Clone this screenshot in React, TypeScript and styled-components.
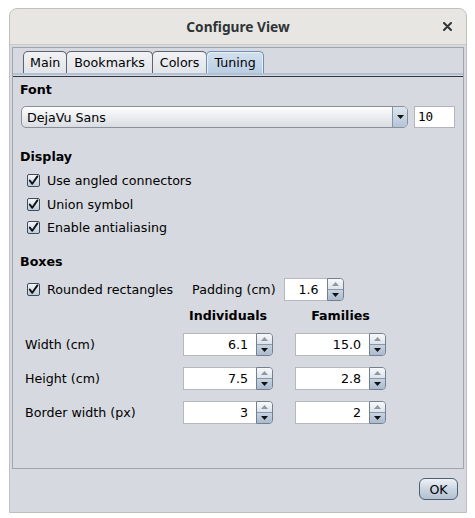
import React from 'react';
import styled, { createGlobalStyle } from 'styled-components';

const GlobalStyle = createGlobalStyle`
  html, body {
    margin: 0;
    padding: 0;
    background: #ffffff;
  }

  body {
    font-family: 'DejaVu Sans', 'Liberation Sans', sans-serif;
    font-size: 12.65px;
    color: #000000;
  }

  * {
    box-sizing: border-box;
  }
`;

const Window = styled.div`
  margin: 8px 0 0 9px;
  width: 458px;
  height: 505px;
  display: flex;
  flex-direction: column;
  border: 1px solid #c2bfba;
  border-radius: 8px 8px 0 0;
  overflow: hidden;
  background: #d6d9df;
`;

const TitleBar = styled.div`
  height: 36px;
  display: grid;
  grid-template-columns: 1fr auto 1fr;
  align-items: center;
  background: #e8e6e3;
  border-bottom: 1px solid #cdcac5;
`;

const Title = styled.div`
  grid-column: 2;
  font-family: 'Noto Sans', 'DejaVu Sans', sans-serif;
  font-weight: bold;
  font-size: 13.7px;
  color: #2e3436;
`;

const Close = styled.div`
  grid-column: 3;
  justify-self: end;
  margin-right: 14px;
  display: flex;
  align-items: center;
`;

const Body = styled.div`
  flex: 1;
  display: flex;
  flex-direction: column;
  padding: 2px 2px 0;
`;

const TabPane = styled.div`
  flex: 1;
  display: flex;
  flex-direction: column;
  border: 1px solid #a1a5ac;
`;

const TabStrip = styled.div`
  display: flex;
  padding: 3px 0 0 10px;
`;

const Tab = styled.div<{ $selected?: boolean }>`
  height: 22px;
  padding: 0 7px;
  margin-left: -1px;
  line-height: 21px;
  border: 1px solid ${(p) => (p.$selected ? '#6e8db0' : '#5f636b')};
  border-bottom: none;
  border-radius: 5px 5px 0 0;
  background: ${(p) =>
    p.$selected
      ? 'linear-gradient(#d3e0ee, #b9cde3)'
      : 'linear-gradient(#f1f2f4, #e1e4e9)'};
  box-shadow: ${(p) =>
    p.$selected ? 'inset 1px 1px 0 #e6eef7, inset -1px 0 0 #e6eef7' : 'none'};

  &:first-child {
    margin-left: 0;
    padding: 0 6px;
  }
`;

const TabBase = styled.div`
  height: 4px;
  border-top: 2px solid #b3c2d3;
  border-bottom: 1px solid #30363d;
`;

const Content = styled.div`
  display: flex;
  flex-direction: column;
  padding: 0 8px;
`;

const SectionLabel = styled.div<{ $top: number }>`
  margin: ${(p) => p.$top}px 0 0 -1px;
  line-height: 16px;
  font-weight: bold;
`;

const FontRow = styled.div`
  margin-top: 8px;
  height: 22px;
  display: flex;
  gap: 6px;
`;

const Combo = styled.div`
  flex: 1;
  display: flex;
  align-items: center;
  border: 1px solid #89909a;
  border-radius: 5px;
  overflow: hidden;
  background: linear-gradient(#fdfdfd, #eceef1 45%, #d9dde2);
`;

const ComboText = styled.div`
  flex: 1;
  padding-left: 5px;
`;

const ComboArrow = styled.div`
  width: 15px;
  align-self: stretch;
  display: flex;
  align-items: center;
  justify-content: center;
  border-left: 1px solid #8294a8;
  background: linear-gradient(#dde6ef, #b3c4d7);
`;

const SizeField = styled.div`
  width: 41px;
  padding-left: 3px;
  line-height: 20px;
  border: 1px solid #b2b6bc;
  background: #ffffff;
  font-family: 'DejaVu Sans Mono', 'Liberation Mono', monospace;
`;

const CheckList = styled.div`
  margin-top: 4px;
  display: flex;
  flex-direction: column;
`;

const CheckRow = styled.div<{ $height: number }>`
  height: ${(p) => p.$height}px;
  display: flex;
  align-items: center;
  gap: 7px;
  padding-left: 6px;
`;

const Box = styled.span`
  width: 13px;
  height: 13px;
  display: flex;
  align-items: center;
  justify-content: center;
  border: 1px solid #3d4a59;
  border-radius: 2px;
  background: linear-gradient(#f3f6f9, #bccbdb);
`;

const RoundedRow = styled.div`
  margin-top: 8px;
  display: flex;
  align-items: center;
`;

const PaddingLabel = styled.span`
  margin: 0 8px 0 19px;
`;

const SizeGrid = styled.div`
  margin-top: 7px;
  padding-left: 4px;
  display: grid;
  grid-template-columns: 136px 90px 91px;
  grid-template-rows: 14px 23px 23px 23px;
  column-gap: 22px;
  row-gap: 11px;
  align-items: center;
`;

const ColumnHead = styled.div`
  line-height: 16px;
  margin-top: 2px;
  font-weight: bold;
  text-align: center;
`;

const SpinnerBox = styled.div<{ $width: number }>`
  width: ${(p) => p.$width}px;
  height: 23px;
  display: flex;
`;

const SpinnerField = styled.div`
  flex: 1;
  padding-right: 8px;
  line-height: 21px;
  text-align: right;
  border: 1px solid #b5b9bf;
  border-right: none;
  background: #ffffff;
`;

const SpinnerButtons = styled.div`
  width: 17px;
  display: flex;
  flex-direction: column;
  border: 1px solid #74808e;
  border-radius: 0 4px 4px 0;
  overflow: hidden;
`;

const SpinHalf = styled.div<{ $down?: boolean }>`
  flex: 1;
  display: flex;
  align-items: center;
  justify-content: center;
  background: ${(p) =>
    p.$down
      ? 'linear-gradient(#c6d3e1, #a9bbcf)'
      : 'linear-gradient(#f7f9fb, #dde3ea)'};
  border-top: ${(p) => (p.$down ? '1px solid #8a97a6' : 'none')};
`;

const Footer = styled.div`
  height: 43px;
  display: flex;
  justify-content: flex-end;
  align-items: flex-start;
  padding: 9px 6px 0 0;
`;

const OkButton = styled.div`
  width: 39px;
  height: 22px;
  display: flex;
  align-items: center;
  justify-content: center;
  border: 1px solid #4e5f71;
  border-radius: 6px;
  background: linear-gradient(#eef2f6, #cbd5e1 50%, #b2c1d2);
`;

const Triangle = ({ up, color }: { up?: boolean; color: string }) => (
  <svg width="7" height="4" viewBox="0 0 7 4">
    <path d={up ? 'M0 4 L3.5 0 L7 4 Z' : 'M0 0 L7 0 L3.5 4 Z'} fill={color} />
  </svg>
);

const CheckBox = () => (
  <Box>
    <svg width="11" height="11" viewBox="0 0 11 11">
      <path
        d="M1.8 5.6 L4.3 8.8 L9.4 1.4"
        fill="none"
        stroke="#111"
        strokeWidth="1.9"
        strokeLinecap="round"
        strokeLinejoin="round"
      />
    </svg>
  </Box>
);

const Spinner = (props: { value: string; width: number }) => (
  <SpinnerBox $width={props.width}>
    <SpinnerField>{props.value}</SpinnerField>
    <SpinnerButtons>
      <SpinHalf>
        <Triangle up color="#8d98a4" />
      </SpinHalf>
      <SpinHalf $down>
        <Triangle color="#111" />
      </SpinHalf>
    </SpinnerButtons>
  </SpinnerBox>
);

const tabs = ['Main', 'Bookmarks', 'Colors', 'Tuning'];

const displayOptions = [
  'Use angled connectors',
  'Union symbol',
  'Enable antialiasing',
];

const sizes = [
  { label: 'Width (cm)', individuals: '6.1', families: '15.0' },
  { label: 'Height (cm)', individuals: '7.5', families: '2.8' },
  { label: 'Border width (px)', individuals: '3', families: '2' },
];

const App = () => (
  <>
    <GlobalStyle />
    <Window>
      <TitleBar>
        <Title>Configure View</Title>
        <Close>
          <svg width="9" height="9" viewBox="0 0 9 9">
            <path
              d="M1 1 L8 8 M8 1 L1 8"
              stroke="#2e3436"
              strokeWidth="2"
              strokeLinecap="round"
            />
          </svg>
        </Close>
      </TitleBar>
      <Body>
        <TabPane>
          <TabStrip>
            {tabs.map((tab) => (
              <Tab key={tab} $selected={tab === 'Tuning'}>
                {tab}
              </Tab>
            ))}
          </TabStrip>
          <TabBase />
          <Content>
            <SectionLabel $top={5}>Font</SectionLabel>
            <FontRow>
              <Combo>
                <ComboText>DejaVu Sans</ComboText>
                <ComboArrow>
                  <Triangle color="#111" />
                </ComboArrow>
              </Combo>
              <SizeField>10</SizeField>
            </FontRow>

            <SectionLabel $top={21}>Display</SectionLabel>
            <CheckList>
              {displayOptions.map((option) => (
                <CheckRow key={option} $height={23.5}>
                  <CheckBox />
                  {option}
                </CheckRow>
              ))}
            </CheckList>

            <SectionLabel $top={14}>Boxes</SectionLabel>
            <RoundedRow>
              <CheckRow $height={23}>
                <CheckBox />
                Rounded rectangles
              </CheckRow>
              <PaddingLabel>Padding (cm)</PaddingLabel>
              <Spinner value="1.6" width={60} />
            </RoundedRow>

            <SizeGrid>
              <span />
              <ColumnHead>Individuals</ColumnHead>
              <ColumnHead>Families</ColumnHead>
              {sizes.map((row) => (
                <React.Fragment key={row.label}>
                  <span>{row.label}</span>
                  <Spinner value={row.individuals} width={90} />
                  <Spinner value={row.families} width={91} />
                </React.Fragment>
              ))}
            </SizeGrid>
          </Content>
        </TabPane>
        <Footer>
          <OkButton>OK</OkButton>
        </Footer>
      </Body>
    </Window>
  </>
);

export default App;
